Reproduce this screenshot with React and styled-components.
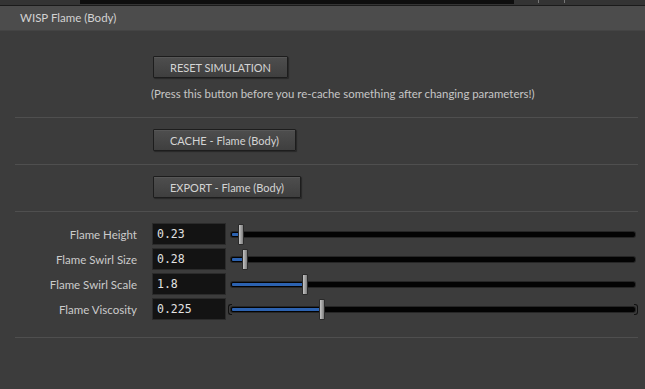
import React from "react";
import styled, { createGlobalStyle } from "styled-components";

const params = [
  { label: "Flame Height", value: "0.23", pos: 0.017 },
  { label: "Flame Swirl Size", value: "0.28", pos: 0.027 },
  { label: "Flame Swirl Scale", value: "1.8", pos: 0.176 },
  { label: "Flame Viscosity", value: "0.225", pos: 0.218, brackets: true },
];

const App = () => {
  return (
    <Panel>
      <GlobalStyle />
      <TopStrip>
        <StripBar />
        <StripTicks>
          <Tick />
          <Tick />
        </StripTicks>
      </TopStrip>
      <Header>WISP Flame (Body)</Header>

      <Section pt={25} h={87}>
        <Button>RESET SIMULATION</Button>
        <Note>
          (Press this button before you re-cache something after changing
          parameters!)
        </Note>
      </Section>

      <Section pt={11} h={47}>
        <Button>CACHE - Flame (Body)</Button>
      </Section>

      <Section pt={11} h={47}>
        <Button>EXPORT - Flame (Body)</Button>
      </Section>

      <Section pt={11} h={126} wide>
        <Rows>
          {params.map((p) => (
            <Row key={p.label}>
              <Label>{p.label}</Label>
              <Field>{p.value}</Field>
              <Slider>
                <Track brackets={p.brackets}>
                  <Fill style={{ width: `${p.pos * 100}%` }} />
                  <Handle style={{ left: `${p.pos * 100}%` }} />
                </Track>
              </Slider>
            </Row>
          ))}
        </Rows>
      </Section>
    </Panel>
  );
};

export default App;

const GlobalStyle = createGlobalStyle`
  html, body {
    margin: 0;
    padding: 0;
    background: #3c3c3c;
  }
  body {
    font-family: "Lato", "Noto Sans", sans-serif;
  }
`;

const Panel = styled.div`
  width: 645px;
  height: 389px;
  background: #3c3c3c;
  overflow: hidden;
`;

const TopStrip = styled.div`
  height: 5px;
  background: #343434;
  border-bottom: 1px solid #1b1b1b;
  display: flex;
  align-items: flex-start;
`;

const StripBar = styled.div`
  margin-left: 80px;
  width: 434px;
  height: 4px;
  background: #0e0e0e;
`;

const StripTicks = styled.div`
  display: flex;
  gap: 25px;
  margin-left: 24px;
`;

const Tick = styled.div`
  width: 1px;
  height: 3px;
  background: #777;
`;

const Header = styled.div`
  height: 24px;
  background: #4c4c4c;
  color: #d2d2d2;
  font-size: 11.5px;
  line-height: 24px;
  padding-left: 20px;
  border-bottom: 1px solid #444;
`;

const Section = styled.div`
  box-sizing: border-box;
  height: ${(props) => props.h}px;
  margin: 0 7px 0 15px;
  padding-top: ${(props) => props.pt}px;
  padding-left: ${(props) => (props.wide ? 0 : 138)}px;
  border-bottom: 1px solid #4f4f4f;
  display: flex;
  flex-direction: column;
  align-items: flex-start;
`;

const Button = styled.div`
  box-sizing: border-box;
  height: 22px;
  padding: 0 16px;
  display: flex;
  align-items: center;
  border: 1px solid #1d1d1d;
  border-radius: 1px;
  background: linear-gradient(#4e4e4e, #3f3f3f);
  box-shadow: inset 0 1px 0 #575757, 1px 1px 1px rgba(0, 0, 0, 0.35);
  color: #d4d4d4;
  font-size: 11px;
  white-space: nowrap;
`;

const Note = styled.div`
  margin-top: 9px;
  margin-left: -2px;
  color: #c6c6c6;
  font-size: 11.4px;
  line-height: 14px;
`;

const Rows = styled.div`
  width: 100%;
  display: flex;
  flex-direction: column;
  gap: 3px;
`;

const Row = styled.div`
  display: flex;
  align-items: center;
  height: 22px;
`;

const Label = styled.div`
  width: 122px;
  text-align: right;
  color: #cbcbcb;
  font-size: 11.5px;
  flex-shrink: 0;
`;

const Field = styled.div`
  box-sizing: border-box;
  width: 74px;
  height: 22px;
  margin-left: 15px;
  padding-left: 4px;
  background: #131313;
  border: 1px solid #2b2b2b;
  color: #e2e2e2;
  font-family: "DejaVu Sans Mono", "Liberation Mono", monospace;
  font-size: 11.5px;
  line-height: 20px;
  flex-shrink: 0;
`;

const Slider = styled.div`
  flex: 1;
  margin: 0 1px 0 3px;
  padding: 0 2px;
  display: flex;
  align-items: center;
`;

const Track = styled.div`
  position: relative;
  flex: 1;
  height: 5px;
  background: #030303;
  border-radius: 2px;
  box-shadow: 0 0 0 1px #262626;

  &::before,
  &::after {
    content: "";
    display: ${(props) => (props.brackets ? "block" : "none")};
    position: absolute;
    top: -3px;
    width: 3px;
    height: 9px;
    border: 1px solid #111;
  }
  &::before {
    left: -3px;
    border-right: none;
    border-radius: 3px 0 0 3px;
  }
  &::after {
    right: -3px;
    border-left: none;
    border-radius: 0 3px 3px 0;
  }
`;

const Fill = styled.div`
  position: absolute;
  left: 1px;
  top: 1px;
  height: 3px;
  background: #2c62b0;
  border-radius: 1px;
`;

const Handle = styled.div`
  position: absolute;
  top: -8px;
  box-sizing: border-box;
  width: 6px;
  height: 21px;
  background: linear-gradient(90deg, #c4c4c4, #9a9a9a 60%, #7d7d7d);
  border: 1px solid #2a2a2a;
  border-radius: 1px;
`;
